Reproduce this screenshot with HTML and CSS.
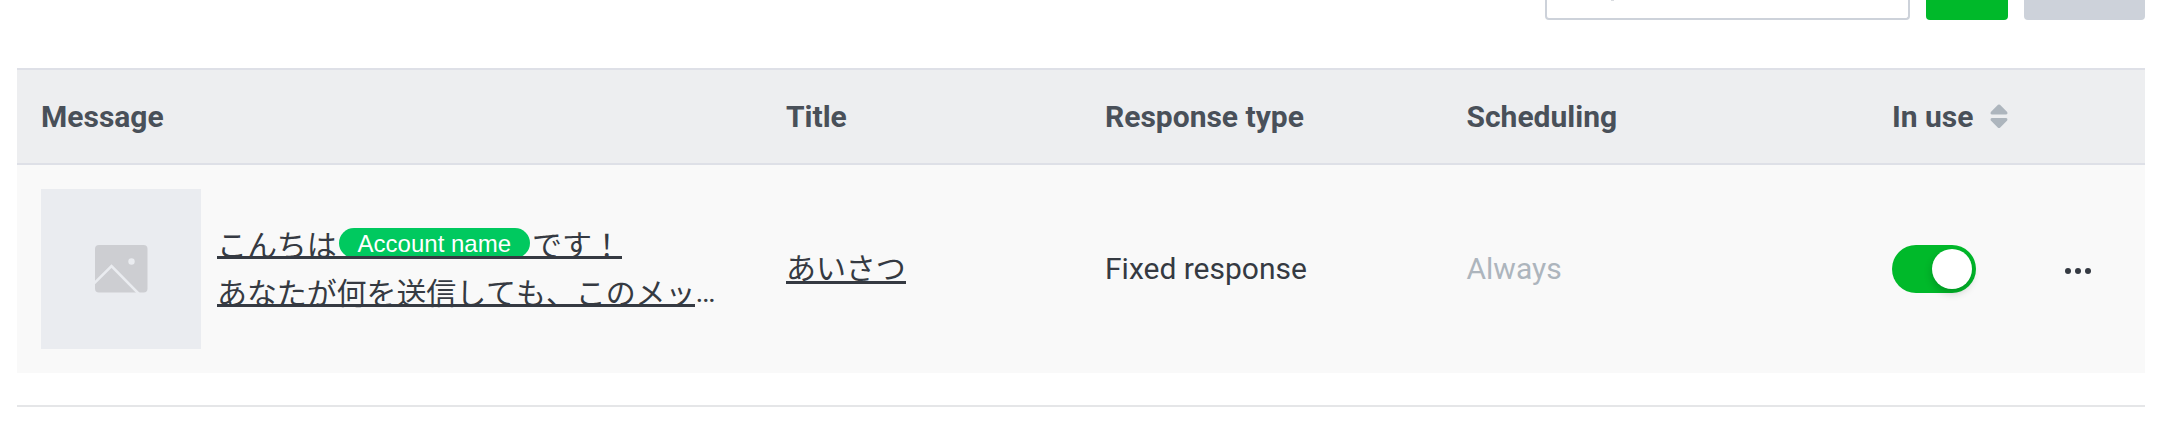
FILE: index.html
```html
<!DOCTYPE html>
<html lang="en">
<head>
<meta charset="utf-8">
<title>Auto-response messages</title>
<link rel="stylesheet" href="styles.css">
</head>
<body>
<main class="page">
  <div class="toolbar">
    <div class="search"><span class="search-mark"></span></div>
    <div class="btn btn-primary"></div>
    <div class="btn btn-muted"></div>
  </div>
  <section class="table">
    <div class="row head">
      <div>Message</div>
      <div>Title</div>
      <div>Response type</div>
      <div>Scheduling</div>
      <div class="sortable">In use
        <svg class="sort" width="18" height="25" viewBox="0 0 18 25"><path d="M8 .8Q9 0 10 .8L17.2 8Q18 10.500 16 10.500H2Q0 10.500.8 8ZM8 23.700Q9 24.500 10 23.700L17.200 16.500Q18 14 16 14H2Q0 14 .8 16.500Z"/></svg>
      </div>
      <div></div>
    </div>
    <div class="row item">
      <div class="message">
        <div class="thumb">
          <svg width="53" height="48" viewBox="0 0 53 48"><rect width="52.500" height="47.500" rx="4" fill="#cdced2"/><circle cx="36.500" cy="16.500" r="3.200" fill="#eaecf0"/><path d="M-1 38.500L16.500 21L44 49" fill="none" stroke="#eaecf0" stroke-width="2.600"/></svg>
        </div>
        <div class="text" lang="ja">
          <div class="line"><span class="link">こんちは<span class="tag">Account name</span>です！</span></div>
          <div class="line"><span class="link">あなたが何を送信しても、このメッ</span><span class="more">…</span></div>
        </div>
      </div>
      <div class="title" lang="ja"><span class="link">あいさつ</span></div>
      <div>Fixed response</div>
      <div class="faded">Always</div>
      <div><div class="toggle"><span class="knob"></span></div></div>
      <div class="menu"><i></i><i></i><i></i></div>
    </div>
  </section>
  <div class="rule"></div>
</main>
</body>
</html>
```
FILE: styles.css
```css
* { box-sizing: border-box; }
body {
  margin: 0;
  background: #fff;
  color: #353a42;
  font: 30px/48px Roboto, "Noto Sans CJK JP", sans-serif;
  overflow: hidden;
}
.page { width: 2128px; margin-left: 17px; }
.toolbar { display: flex; justify-content: flex-end; height: 68px; }
.search {
  width: 365px;
  height: 20px;
  margin-right: 16px;
  padding-left: 64px;
  border: 2px solid #cdd2da;
  border-top: 0;
  border-radius: 0 0 4px 4px;
}
.search-mark { display: block; width: 3px; height: 1px; background: #d9dce0; }
.btn { height: 20px; border-radius: 0 0 4px 4px; }
.btn-primary { width: 82px; margin-right: 16px; background: #00b92a; }
.btn-muted { width: 121px; background: #cdd2da; }
.row {
  display: grid;
  grid-template-columns: 745px 319px 361.5px 425.5px 173px 80px;
  align-items: center;
  padding-left: 24px;
}
.head {
  height: 97px;
  border-top: 2px solid #dee0e7;
  border-bottom: 2px solid #dee0e7;
  background: #edeef0;
  color: #495059;
  font-weight: 700;
}
.sortable { display: flex; align-items: center; gap: 17px; }
.sort { fill: #adb5bd; }
.item { height: 208px; background: #f9f9f9; }
.message { display: flex; align-items: center; gap: 16px; }
.thumb {
  display: flex;
  align-items: center;
  justify-content: center;
  width: 160px;
  height: 160px;
  background: #eaecf0;
}
.text, .title {
  font-family: "Noto Sans CJK JP", sans-serif;
  font-kerning: none;
  letter-spacing: -.1px;
  white-space: nowrap;
}
.text { padding-bottom: 4px; }
.title { display: flex; padding-bottom: 6px; }
.line { display: flex; height: 48px; }
.link { position: relative; display: block; height: 48px; }
.link::after {
  content: "";
  position: absolute;
  left: 0;
  right: 0;
  top: 37px;
  height: 3px;
  background: #353a42;
}
.title .link::after { top: 39px; }
.tag {
  margin: 0 2px;
  padding: 2px 19px 1px;
  border-radius: 15px;
  background: #00c95f;
  color: #fff;
  font: 24px/28px "Liberation Sans", sans-serif;
  letter-spacing: 0;
  vertical-align: 4px;
}
.more { font-family: Roboto, sans-serif; line-height: 50px; }
.faded { color: #adb5bd; }
.toggle {
  display: flex;
  justify-content: flex-end;
  width: 84px;
  height: 48px;
  padding: 4px;
  border-radius: 24px;
  background: #00b92a;
}
.knob {
  width: 40px;
  height: 40px;
  border-radius: 50%;
  background: #fff;
  box-shadow: 0 4px 8px rgba(0, 0, 0, .2);
}
.menu { display: flex; gap: 4px; padding-top: 3px; }
.menu i { width: 6px; height: 6px; border-radius: 50%; background: #353a42; }
.rule { height: 2px; margin-top: 32px; background: #e5e6e8; }
```
